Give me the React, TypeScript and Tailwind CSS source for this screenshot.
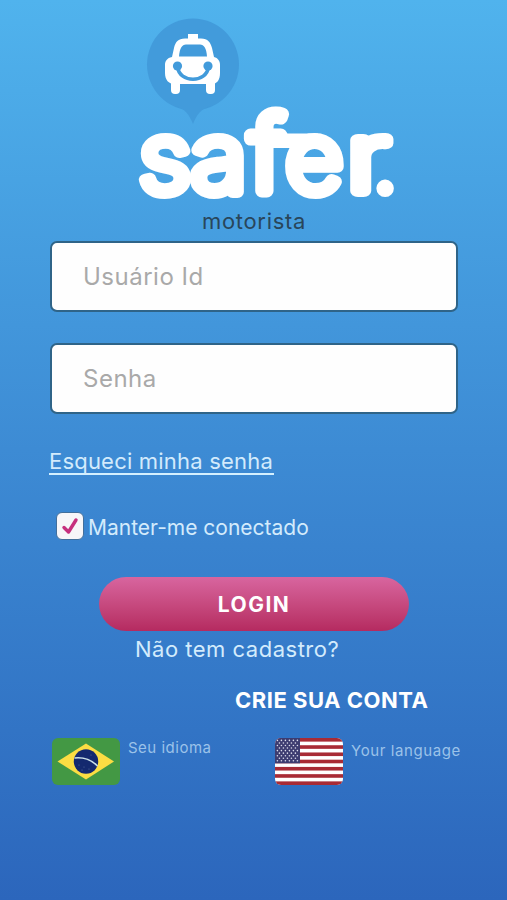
import { useState } from 'react'
import type { ReactNode } from 'react'

function Logo() {
  return (
    <svg
      viewBox="0 14 507 194"
      className="block h-[194px] w-[507px] shrink-0 overflow-visible"
      role="img"
      aria-label="safer."
    >
      {/* Map pin */}
      <circle cx="193" cy="64.500" r="46" fill="#429bdb" />
      <path d="M176 106c9 3 13 8 17 18 4-10 8-15 17-18Z" fill="#429bdb" />
      {/* Taxi */}
      <g fill="#fff">
        <path d="M188 34h10v4.500h3c7 0 9.500 4 11 9.500l2 9c4 1 6 4 6 8v8c0 7-3 11-8 11h-38c-5 0-9-4-9-11v-8c0-4 2-7 7-8l2-9c1.500-6 4-9.500 11-9.500h3Z" />
        <rect x="171" y="76" width="9" height="18" rx="4" />
        <rect x="206" y="76" width="9" height="18" rx="4" />
      </g>
      <path d="M179 56.500c.5-8 3-12 7-12h14c4 0 6.500 4 7 12Z" fill="#429bdb" />
      <path
        d="M177.500 67c1 8 8 12.200 15.500 12.200s14.500-4.200 15.500-12.200"
        fill="none"
        stroke="#429bdb"
        strokeWidth="3.600"
      />
      <circle cx="177.500" cy="66" r="4.600" fill="#429bdb" />
      <circle cx="208" cy="66" r="4.600" fill="#429bdb" />
      {/* Wordmark, the bar links the f to the e */}
      <rect x="262" y="133.500" width="56" height="14.500" fill="#fff" />
      <g
        fill="#fff"
        stroke="#fff"
        strokeWidth="12"
        strokeLinejoin="round"
        className="font-['Inter',sans-serif] text-[95px] font-extralight"
      >
        <text transform="translate(139 191.500) scale(1.08 1)">s</text>
        <text transform="translate(191 191.500) scale(1.09 1)">a</text>
        <text transform="translate(250 191) scale(1.04 1)" strokeWidth="13" className="text-[102px]">f</text>
        <text transform="translate(285.500 191.500) scale(1.05 1)">e</text>
        <text transform="translate(347 191) scale(1.3 1)" className="text-[94px]">r</text>
        <text y="192" x="372" strokeWidth="10">.</text>
      </g>
    </svg>
  )
}

function Field({ placeholder, type }: { placeholder: string; type: string }) {
  return (
    <input
      type={type}
      placeholder={placeholder}
      className="block h-[71px] w-full rounded-[7px] border-2 border-[#2f6488] bg-[#fefefe] pl-[31px] text-2xl tracking-[0.5px] text-gray-700 outline-none placeholder:text-[#a9a9a9]"
    />
  )
}

function BrazilFlag() {
  return (
    <svg viewBox="0 0 68 47" className="h-[47px] w-[68px] rounded-[6px]">
      <rect width="68" height="47" fill="#439844" />
      <path d="M5.500 23.500 34 5.500l28 18-28 18Z" fill="#fbdd43" />
      <circle cx="34" cy="23.500" r="12.200" fill="#14296f" />
      <path d="M22.500 20c9-1 17 2 23 8" fill="none" stroke="#c9dfe8" strokeWidth="1.600" />
      <g fill="#536a9c">
        <circle cx="27" cy="27" r=".6" />
        <circle cx="32" cy="29" r=".6" />
        <circle cx="37" cy="31" r=".6" />
        <circle cx="30" cy="32" r=".6" />
        <circle cx="39" cy="17" r=".6" />
      </g>
    </svg>
  )
}

const STRIPES = [0, 2, 4, 6, 8, 10, 12]
const STAR_ROWS = [0, 1, 2, 3, 4, 5, 6, 7, 8]
const STAR_COLS = [0, 1, 2, 3, 4, 5]

function UsaFlag() {
  return (
    <svg viewBox="0 0 68 47" className="h-[47px] w-[68px] rounded-[6px]">
      <rect width="68" height="47" fill="#fff" />
      {STRIPES.map((row) => (
        <rect key={row} y={(row * 47) / 13} width="68" height={47 / 13} fill="#a82b35" />
      ))}
      <rect width="25" height="25.300" fill="#3d3c70" />
      {STAR_ROWS.map((row) =>
        STAR_COLS.slice(row % 2).map((col) => (
          <circle
            key={`${row}-${col}`}
            cx={2.400 + col * 4 - (row % 2) * 2}
            cy={2.400 + row * 2.550}
            r=".8"
            fill="#dcdceb"
          />
        ))
      )}
    </svg>
  )
}

function Language({ flag, children }: { flag: ReactNode; children: ReactNode }) {
  return (
    <button type="button" className="flex items-start gap-[8px] whitespace-nowrap">
      {flag}
      {children}
    </button>
  )
}

export default function App() {
  const [remember, setRemember] = useState(true)

  return (
    <main className="flex h-[900px] w-[507px] flex-col overflow-hidden bg-linear-to-b from-[#50b3ed] via-[#3d8bd4] to-[#2c66bc] pt-[14px] font-['Inter',sans-serif] text-[#d3ebfc]">
      <Logo />
      <p className="h-[33px] pl-px text-center text-[22px] leading-[27px] tracking-[0.7px] text-[#29465a]">
        motorista
      </p>

      <form className="flex flex-col px-[49px]" onSubmit={(e) => e.preventDefault()}>
        <div className="flex flex-col gap-[31px] pl-px">
          <Field placeholder="Usuário Id" type="text" />
          <Field placeholder="Senha" type="password" />
        </div>

        <a
          href="#senha"
          className="mt-[33px] h-[28px] w-[225px] self-start border-b-2 border-[#d4f0ff] text-[22px] leading-[28px] tracking-[0.2px] whitespace-nowrap"
        >
          Esqueci minha senha
        </a>

        <button
          type="button"
          role="checkbox"
          aria-checked={remember}
          onClick={() => setRemember(!remember)}
          className="mt-[37px] ml-[7px] flex h-[28px] items-center gap-[4px] self-start text-[21px] whitespace-nowrap"
        >
          <span className="flex size-[28px] items-center justify-center rounded-[6px] border border-[#426f9c] bg-[#f7f6f9]">
            {remember && (
              <svg viewBox="0 0 20 20" className="size-[20px]" fill="none">
                <path d="m4 11.500 4.500 4.500 7.500-12" stroke="#c62f7e" strokeWidth="3.400" strokeLinecap="round" strokeLinejoin="round" />
              </svg>
            )}
          </span>
          <span className="pt-[3px]">Manter-me conectado</span>
        </button>

        <button
          type="submit"
          className="mt-[37px] ml-[50px] h-[54px] w-[310px] rounded-full bg-linear-to-b from-[#d8659f] to-[#b52a60] pt-[2px] text-[21px] font-bold tracking-[1.5px] text-white"
        >
          LOGIN
        </button>
      </form>

      <p className="mt-[4px] ml-[135px] h-[28px] text-[22px] leading-[28px] tracking-[0.5px] whitespace-nowrap">
        Não tem cadastro?
      </p>
      <a href="#conta" className="mt-[23px] ml-[235px] h-[28px] text-[22px] leading-[28px] font-bold tracking-[0.5px] whitespace-nowrap text-white">
        CRIE SUA CONTA
      </a>

      <div className="mt-[24px] flex pl-[52px] text-[15px] leading-[20px] tracking-[0.5px] text-[#9bc2e9]">
        <div className="w-[223px]">
          <Language flag={<BrazilFlag />}>
            <span>Seu idioma</span>
          </Language>
        </div>
        <Language flag={<UsaFlag />}>
          <span className="mt-[3px] tracking-[0.6px]">Your language</span>
        </Language>
      </div>
    </main>
  )
}
